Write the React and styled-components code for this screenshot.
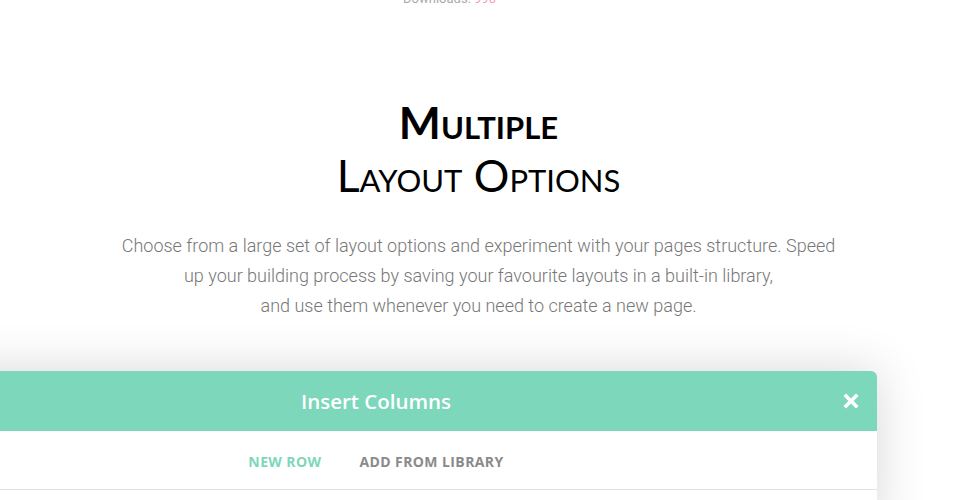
import React from "react";
import styled, { createGlobalStyle } from "styled-components";

const Global = createGlobalStyle`
  html, body { margin: 0; padding: 0; background: #fff; overflow: hidden; }
  body { width: 965px; height: 500px; }
`;

const Page = styled.div`
  width: 965px;
  height: 500px;
  overflow: hidden;
  display: flex;
  flex-direction: column;
  align-items: center;
  padding-right: 8px;
  box-sizing: border-box;
`;

const Downloads = styled.div`
  margin-top: -9px;
  margin-right: 58px;
  height: 16px;
  font-family: Roboto, "Liberation Sans", sans-serif;
  font-size: 13px;
  line-height: 16px;
  color: #aaa;
`;

const Count = styled.span`
  color: #f4a0b0;
`;

const Heading = styled.h2`
  margin: 88px 0 0;
  text-align: center;
  font-family: Lato, "Open Sans", sans-serif;
  font-variant: small-caps;
  color: #000;
  font-weight: 400;
  font-size: 44.5px;
  line-height: 53px;
`;

const Strong = styled.span`
  display: block;
  font-weight: 700;
`;

const Light = styled.span`
  display: block;
  font-weight: 400;
`;

const Lead = styled.p`
  margin: 30px 0 0;
  max-width: 730px;
  text-align: center;
  font-family: Roboto, "Liberation Sans", sans-serif;
  font-weight: 300;
  font-size: 18px;
  line-height: 30px;
  color: #777;
`;

const Modal = styled.div`
  align-self: flex-start;
  margin-top: 50px;
  margin-left: -125px;
  width: 1002px;
  flex-shrink: 0;
  background: #fff;
  border-radius: 0 6px 0 0;
  box-shadow: 0 0 50px rgba(0, 0, 0, 0.16);
`;

const Header = styled.div`
  position: relative;
  height: 60px;
  background: #7dd7bb;
  border-radius: 0 6px 0 0;
  display: flex;
  align-items: center;
  justify-content: center;
`;

const Title = styled.h3`
  margin: 0;
  font-family: "Open Sans", sans-serif;
  font-weight: 600;
  font-size: 20.5px;
  color: #fff;
`;

const Close = styled.button`
  position: absolute;
  right: 18px;
  top: 50%;
  transform: translateY(-50%);
  border: 0;
  background: none;
  padding: 0;
  display: flex;
  cursor: pointer;
`;

const Tabs = styled.div`
  height: 59px;
  padding-top: 2px;
  box-sizing: border-box;
  border-bottom: 1px solid #e3e3e3;
  display: flex;
  align-items: center;
  justify-content: center;
  gap: 38px;
`;

const Tab = styled.span`
  font-family: "Open Sans", sans-serif;
  font-weight: 700;
  font-size: 14px;
  letter-spacing: 0.4px;
  text-transform: uppercase;
  color: ${(p) => (p.$active ? "#7dd7bb" : "#8a8a8a")};
`;

const Body = styled.div`
  height: 40px;
`;

export default function App() {
  return (
    <>
      <Global />
      <Page>
        <Downloads>
          Downloads: <Count>990</Count>
        </Downloads>
        <Heading>
          <Strong>Multiple</Strong>
          <Light>Layout Options</Light>
        </Heading>
        <Lead>
          Choose from a large set of layout options and experiment with your pages structure. Speed up your
          building process by saving your favourite layouts in a built-in library,
          <br />
          and use them whenever you need to create a new page.
        </Lead>
        <Modal>
          <Header>
            <Title>Insert Columns</Title>
            <Close aria-label="Close">
              <svg width="16" height="16" viewBox="0 0 16 16">
                <path d="M3 3 L13 13 M13 3 L3 13" stroke="#fff" strokeWidth="3.6" strokeLinecap="square" />
              </svg>
            </Close>
          </Header>
          <Tabs>
            <Tab $active>New Row</Tab>
            <Tab>Add from Library</Tab>
          </Tabs>
          <Body />
        </Modal>
      </Page>
    </>
  );
}
